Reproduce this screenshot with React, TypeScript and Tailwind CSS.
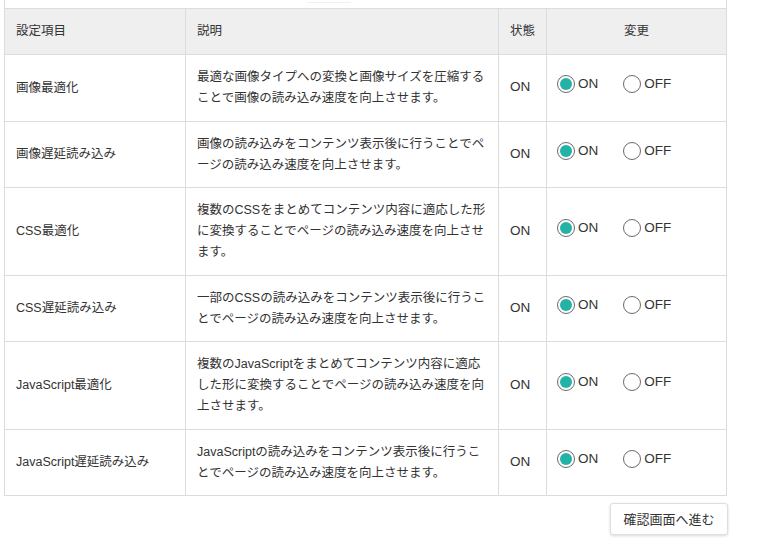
import React from "react";

type Row = {
  name: string;
  desc: string[];
  status: string;
  value: "on" | "off";
};

const rows: Row[] = [
  {
    name: "画像最適化",
    desc: ["最適な画像タイプへの変換と画像サイズを圧縮する", "ことで画像の読み込み速度を向上させます。"],
    status: "ON",
    value: "on",
  },
  {
    name: "画像遅延読み込み",
    desc: ["画像の読み込みをコンテンツ表示後に行うことでペ", "ージの読み込み速度を向上させます。"],
    status: "ON",
    value: "on",
  },
  {
    name: "CSS最適化",
    desc: ["複数のCSSをまとめてコンテンツ内容に適応した形", "に変換することでページの読み込み速度を向上させ", "ます。"],
    status: "ON",
    value: "on",
  },
  {
    name: "CSS遅延読み込み",
    desc: ["一部のCSSの読み込みをコンテンツ表示後に行うこ", "とでページの読み込み速度を向上させます。"],
    status: "ON",
    value: "on",
  },
  {
    name: "JavaScript最適化",
    desc: ["複数のJavaScriptをまとめてコンテンツ内容に適応", "した形に変換することでページの読み込み速度を向", "上させます。"],
    status: "ON",
    value: "on",
  },
  {
    name: "JavaScript遅延読み込み",
    desc: ["JavaScriptの読み込みをコンテンツ表示後に行うこ", "とでページの読み込み速度を向上させます。"],
    status: "ON",
    value: "on",
  },
];

function Radio({ checked, label }: { checked: boolean; label: string }) {
  return (
    <label className="flex items-center gap-[3px]">
      <span className="flex h-[18px] w-[18px] items-center justify-center rounded-full border border-[#6b6b6b] bg-white">
        {checked && <span className="h-[12px] w-[12px] rounded-full bg-[#22b3a6]" />}
      </span>
      <span className="text-[13.5px] leading-[18px]">{label}</span>
    </label>
  );
}

function SettingRow({ row }: { row: Row }) {
  return (
    <tr className="border-t border-[#dcdcdc]">
      <td className="border-r border-[#dcdcdc] px-[11px] pt-[12px] pb-[11.5px] align-middle">
        <div className="h-[21px] whitespace-nowrap">{row.name}</div>
      </td>
      <td className="border-r border-[#dcdcdc] px-[11px] pt-[12px] pb-[11.5px] align-middle">
        {row.desc.map((line, i) => (
          <div key={i} className="h-[21px] whitespace-nowrap">
            {line}
          </div>
        ))}
      </td>
      <td className="border-r border-[#dcdcdc] px-[11px] pt-[10px] pb-[12px] align-middle text-[13.5px]">
        <div className="h-[21px]">{row.status}</div>
      </td>
      <td className="px-[10px] pt-[10px] pb-[17px] align-middle">
        <div className="flex items-center gap-[25px]">
          <Radio checked={row.value === "on"} label="ON" />
          <Radio checked={row.value === "off"} label="OFF" />
        </div>
      </td>
    </tr>
  );
}

export default function App() {
  return (
    <div
      className="h-[550px] w-[779px] bg-white text-[12.5px] leading-[21px] text-[#333]"
      style={{ fontFamily: '"Liberation Sans", "Noto Sans CJK JP", sans-serif' }}
    >
      <div className="ml-[4px] w-[723px]">
        <div className="h-[8px] border-x border-[#dcdcdc]">
          <div className="ml-[302px] h-[3px] w-[44px] border-b border-[#f0f0f0]" />
        </div>
        <table className="w-full table-fixed border-collapse border border-[#dcdcdc]">
          <colgroup>
            <col className="w-[181px]" />
            <col className="w-[313px]" />
            <col className="w-[48px]" />
            <col />
          </colgroup>
          <thead>
            <tr className="bg-[#efefef]">
              <th className="border-r border-[#dcdcdc] px-[11px] py-[12px] text-left font-normal">
                <div className="h-[21px]">設定項目</div>
              </th>
              <th className="border-r border-[#dcdcdc] px-[11px] py-[12px] text-left font-normal">
                <div className="h-[21px]">説明</div>
              </th>
              <th className="border-r border-[#dcdcdc] px-[10px] py-[12px] text-center font-normal">
                <div className="h-[21px]">状態</div>
              </th>
              <th className="px-[11px] py-[12px] text-center font-normal">
                <div className="h-[21px]">変更</div>
              </th>
            </tr>
          </thead>
          <tbody>
            {rows.map((r) => (
              <SettingRow key={r.name} row={r} />
            ))}
          </tbody>
        </table>
        <div className="mt-[7px] flex justify-end">
          <button className="-mr-[1px] h-[32px] w-[118px] rounded-[3px] border border-[#dedede] bg-white text-[13px] text-[#333] shadow-[0_1px_3px_rgba(0,0,0,0.15)]">
            確認画面へ進む
          </button>
        </div>
      </div>
    </div>
  );
}
